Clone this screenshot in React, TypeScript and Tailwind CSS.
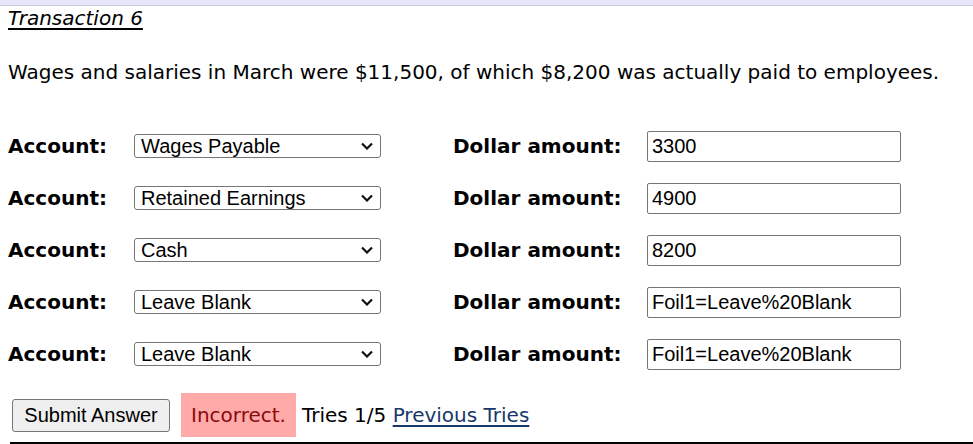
import React from "react";

const rows = [
  { account: "Wages Payable", amount: "3300" },
  { account: "Retained Earnings", amount: "4900" },
  { account: "Cash", amount: "8200" },
  { account: "Leave Blank", amount: "Foil1=Leave%20Blank" },
  { account: "Leave Blank", amount: "Foil1=Leave%20Blank" },
];

const options = ["Leave Blank", "Cash", "Wages Payable", "Retained Earnings", "Wages Expense"];

function Chevron() {
  return (
    <svg
      className="pointer-events-none absolute right-[8px] top-1/2 -translate-y-1/2"
      width="12"
      height="8"
      viewBox="0 0 12 8"
      fill="none"
    >
      <path d="M1 1.5L6 6.5L11 1.5" stroke="#111" strokeWidth="2.2" />
    </svg>
  );
}

export default function App() {
  return (
    <div className="w-[973px] h-[444px] overflow-hidden bg-white text-black font-['DejaVu_Sans',Verdana,sans-serif] text-[20px] leading-[24px]">
      <div className="h-[6px] bg-[#e6e6fa] border-b border-[#c8c8d8]" />
      <div className="px-[8px]">
        <div className="mt-0">
          <span className="italic underline underline-offset-[3px]">Transaction 6</span>
        </div>
        <p className="mt-[30px]">
          Wages and salaries in March were $11,500, of which $8,200 was actually paid to employees.
        </p>
        <div className="mt-[36px] flex flex-col">
          {rows.map((r, i) => (
            <div key={i} className="h-[52px] flex items-center">
              <div className="w-[126px] font-bold">Account:</div>
              <div className="relative w-[247px]">
                <select
                  defaultValue={r.account}
                  className="appearance-none w-[247px] h-[24px] border border-[#767676] rounded-[3px] bg-white pl-[6px] pr-[24px] font-['Liberation_Sans',Arial,sans-serif] text-[20px] leading-[22px] text-black"
                >
                  {options.map((o) => (
                    <option key={o} value={o}>
                      {o}
                    </option>
                  ))}
                </select>
                <Chevron />
              </div>
              <div className="ml-[72px] w-[194px] font-bold">Dollar amount:</div>
              <input
                type="text"
                defaultValue={r.amount}
                className="w-[254px] h-[31px] border border-[#767676] rounded-[2px] bg-white pl-[4px] font-['Liberation_Sans',Arial,sans-serif] text-[20px] text-black"
              />
            </div>
          ))}
        </div>
        <div className="mt-[13px] flex items-center h-[44px]">
          <button className="ml-[4px] w-[158px] h-[33px] border border-[#767676] rounded-[3px] bg-[#efefef] font-['Liberation_Sans',Arial,sans-serif] text-[20px] leading-[22px] text-black">
            Submit Answer
          </button>
          <span className="ml-[11px] h-[44px] px-[10px] flex items-center bg-[#ffa9a9] text-[#8b0a0a]">
            Incorrect.
          </span>
          <span className="ml-[6px] whitespace-pre">Tries 1/5 </span>
          <a href="#" className="underline underline-offset-[3px] text-[#17386b]">
            Previous Tries
          </a>
        </div>
        <div className="mt-[5px] ml-[2px] -mr-[8px] h-[2px] bg-black" />
      </div>
    </div>
  );
}
